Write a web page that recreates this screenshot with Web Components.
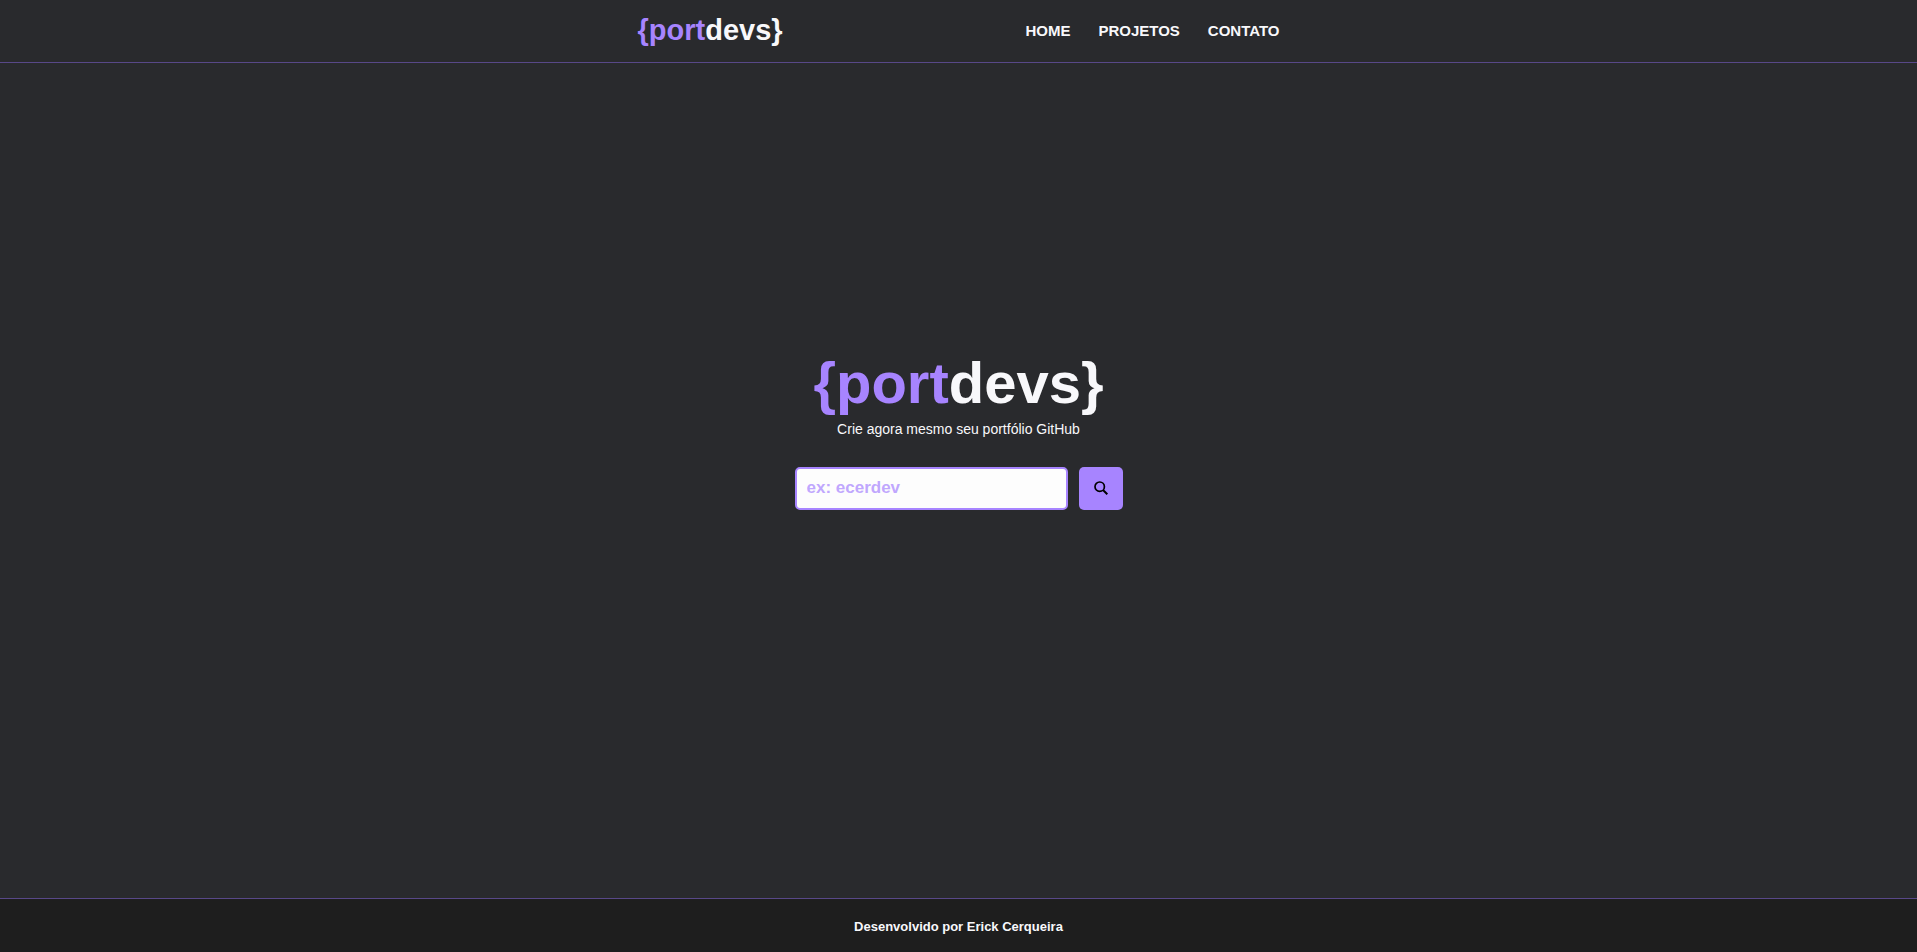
<!DOCTYPE html>
<html lang="pt-BR">
<head>
<meta charset="utf-8">
<title>portdevs</title>
<style>
body { margin: 0; background: #292a2d; color: #f8f8fb; font-family: "Liberation Sans", Arial, sans-serif; }
</style>
</head>
<body>
<port-app></port-app>
<script>
class PortElement extends HTMLElement {
  constructor() {
    super();
    this.attachShadow({ mode: "open" }).innerHTML = this.constructor.markup;
  }
}

class PortLogo extends PortElement {
  static markup = `
    <style>
      :host { display: block; font-weight: 700; white-space: nowrap; }
      span { color: #a784ff; }
    </style>
    <span>{port</span>devs}`;
}

class PortHeader extends PortElement {
  static markup = `
    <style>
      :host { display: block; border-bottom: 1px solid #584888; }
      header { display: flex; justify-content: space-between; align-items: center; box-sizing: border-box; max-width: 642px; height: 62px; margin: 0 auto; }
      port-logo { padding-bottom: 2px; font-size: 29px; line-height: 32px; }
      nav { display: flex; gap: 28px; }
      a { color: inherit; font-size: 15px; font-weight: 700; line-height: 16px; text-decoration: none; }
    </style>
    <header>
      <port-logo></port-logo>
      <nav><a href="#home">HOME</a><a href="#projetos">PROJETOS</a><a href="#contato">CONTATO</a></nav>
    </header>`;
}

class PortSearch extends PortElement {
  static markup = `
    <style>
      :host { display: block; }
      form { display: flex; gap: 11px; }
      input { box-sizing: border-box; width: 273px; height: 43px; padding: 0 10px; border: 2px solid #a784ff; border-radius: 5px; background: #fdfdfd; color: #292a2d; font: 700 17px "Liberation Sans", Arial, sans-serif; }
      input::placeholder { color: #a784ff; opacity: .7; }
      button { display: grid; place-items: center; width: 44px; height: 43px; padding: 0; border: 0; border-radius: 5px; background: #a784ff; color: #000; }
      svg { display: block; width: 14px; height: 14px; }
    </style>
    <form>
      <input type="text" aria-label="Usuário do GitHub" placeholder="ex: ecerdev">
      <button type="button" aria-label="Buscar"><svg viewBox="0 0 14 14" fill="none" stroke="currentColor" stroke-width="1.7" aria-hidden="true"><circle cx="5.700" cy="5.700" r="4.700"/><path d="M9 9 13.300 13.300" stroke-width="2"/></svg></button>
    </form>`;
}

class PortHero extends PortElement {
  static markup = `
    <style>
      :host { display: flex; flex-direction: column; align-items: center; justify-content: center; }
      h1 { margin: 0; font-size: 58px; line-height: 66px; }
      p { margin: 5px 0 30px; font-size: 14px; line-height: 16px; }
    </style>
    <h1><port-logo></port-logo></h1>
    <p>Crie agora mesmo seu portfólio GitHub</p>
    <port-search></port-search>`;
}

class PortFooter extends PortElement {
  static markup = `
    <style>
      :host { display: block; border-top: 1px solid #584888; background: #1e1e1e; }
      footer { padding: 20px 20px 17px; font-size: 13px; font-weight: 700; line-height: 16px; text-align: center; }
    </style>
    <footer><slot></slot></footer>`;
}

class PortApp extends PortElement {
  static markup = `
    <style>
      :host { display: flex; flex-direction: column; min-height: 100vh; }
      main { display: flex; flex: 1; flex-direction: column; justify-content: center; padding-bottom: 102px; }
    </style>
    <port-header></port-header>
    <main><port-hero></port-hero></main>
    <port-footer>Desenvolvido por Erick Cerqueira</port-footer>`;
}

customElements.define("port-logo", PortLogo);
customElements.define("port-header", PortHeader);
customElements.define("port-search", PortSearch);
customElements.define("port-hero", PortHero);
customElements.define("port-footer", PortFooter);
customElements.define("port-app", PortApp);
</script>
</body>
</html>
